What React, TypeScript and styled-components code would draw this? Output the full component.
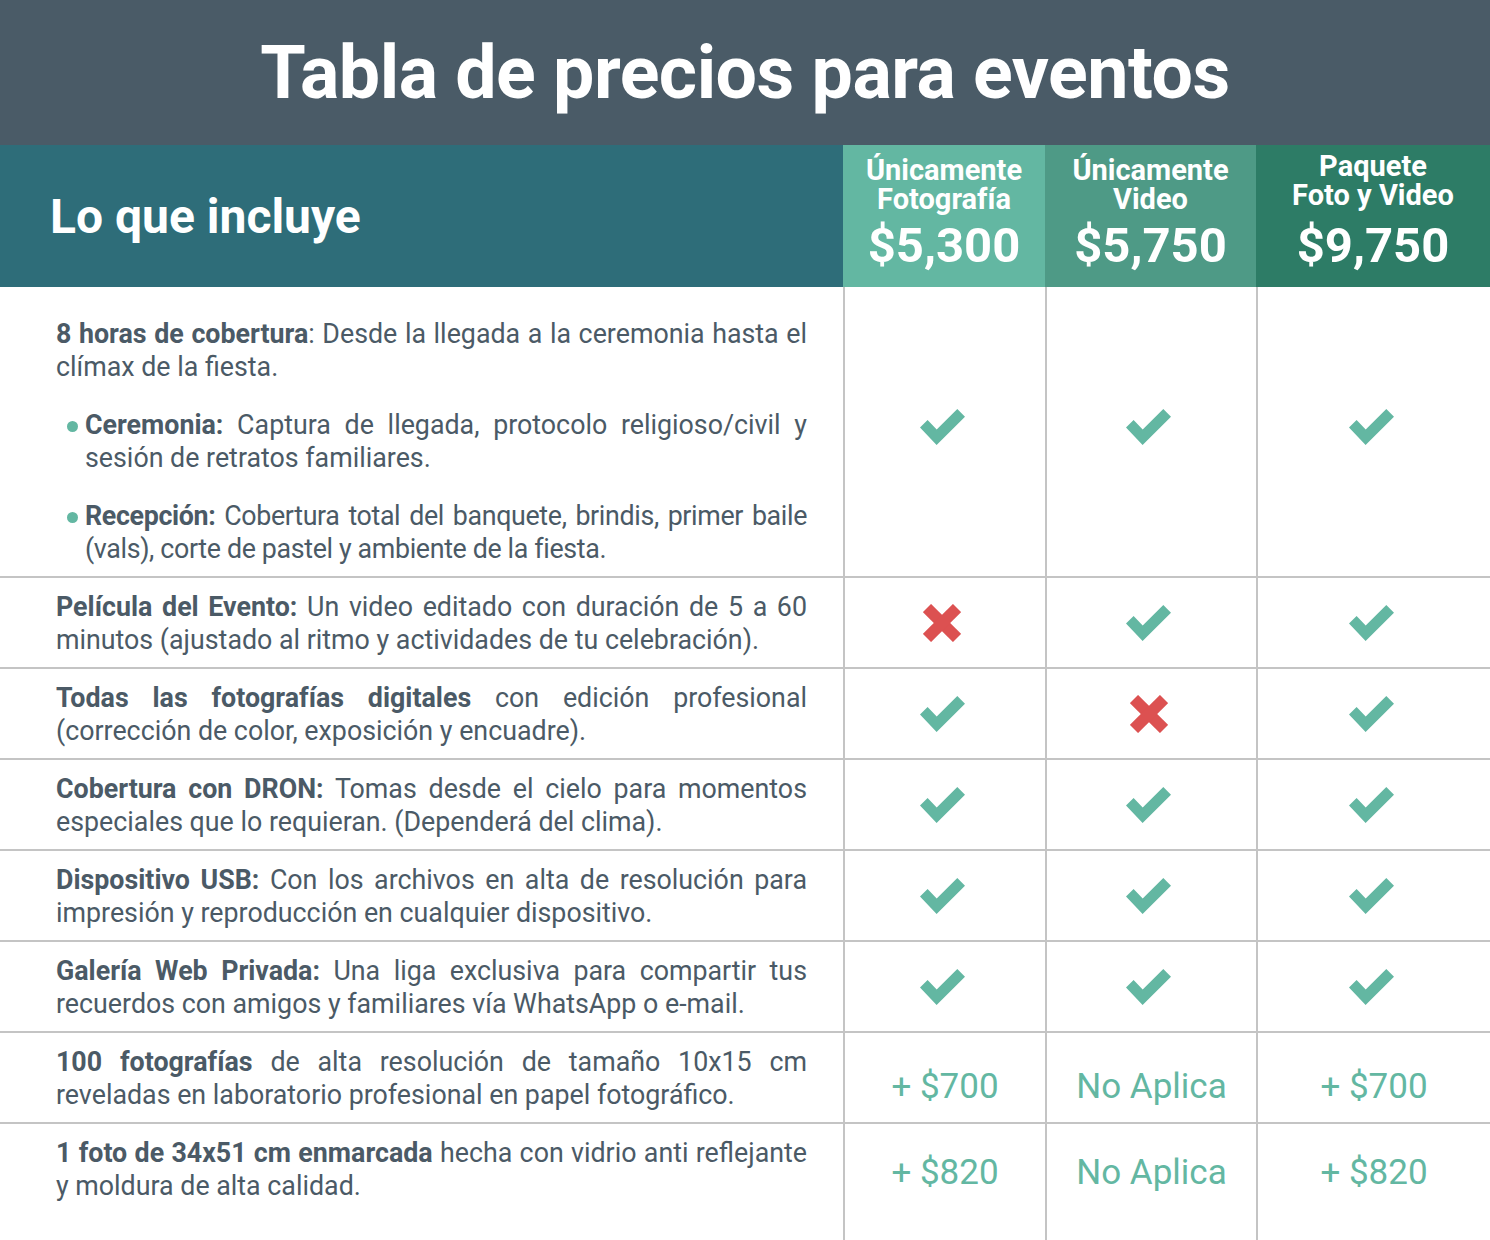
import { FC, ReactNode } from "react";
import styled, { createGlobalStyle } from "styled-components";

const GlobalStyle = createGlobalStyle`
  body {
    margin: 0;
    background: #ffffff;
    font-family: Roboto, "Liberation Sans", sans-serif;
  }
`;

const COLS = "843px 202px 211px 1fr";
const GREEN = "#63b7a2";
const RED = "#dc5151";
const LINE = "#c4c4c4";

const Page = styled.div`
  width: 1490px;
  height: 1240px;
  overflow: hidden;
  display: flex;
  flex-direction: column;
`;

const TitleBar = styled.header`
  background: #4a5b67;
  height: 145px;
  display: flex;
  align-items: center;
  justify-content: center;
`;

const Title = styled.h1`
  margin: 0;
  color: #ffffff;
  font-size: 73.5px;
  font-weight: 700;
  letter-spacing: -0.5px;
`;

const HeadRow = styled.div`
  display: grid;
  grid-template-columns: ${COLS};
  height: 142px;
`;

const HeadLabel = styled.div`
  background: #2e6d79;
  display: flex;
  align-items: center;
  padding-left: 50px;
  color: #ffffff;
  font-size: 48px;
  font-weight: 700;
`;

const PlanHead = styled.div<{ $bg: string }>`
  background: ${(p) => p.$bg};
  display: flex;
  flex-direction: column;
  align-items: center;
  justify-content: flex-end;
  padding-bottom: 15px;
  color: #ffffff;
  text-align: center;
`;

const PlanName = styled.div`
  font-size: 29px;
  font-weight: 700;
  line-height: 29px;
`;

const PlanPrice = styled.div<{ $gap: number }>`
  font-size: 49px;
  font-weight: 700;
  line-height: 52px;
  margin-top: ${(p) => p.$gap}px;
`;

const Row = styled.div<{ $last?: boolean }>`
  display: grid;
  grid-template-columns: ${COLS};
  border-bottom: ${(p) => (p.$last ? "none" : `2px solid ${LINE}`)};
  flex: ${(p) => (p.$last ? 1 : "none")};
`;

const Feature = styled.div<{ $top?: number }>`
  padding: ${(p) => p.$top ?? 13}px 36px 10px 56px;
  font-size: 26.8px;
  line-height: 33px;
  color: #4b5a66;
  text-align: justify;

  b {
    font-weight: 700;
  }
`;

const Para = styled.p`
  margin: 0;
`;

const Bullet = styled.p<{ $tight?: boolean }>`
  position: relative;
  margin: 25px 0 0;
  padding-left: 29px;
  letter-spacing: ${(p) => (p.$tight ? "-0.35px" : "normal")};

  &::before {
    content: "";
    position: absolute;
    left: 11px;
    top: 12px;
    width: 11px;
    height: 11px;
    border-radius: 50%;
    background: ${GREEN};
  }
`;

const Mark = styled.div<{ $tail?: number }>`
  border-left: 2px solid ${LINE};
  display: flex;
  align-items: center;
  justify-content: center;
  padding-bottom: ${(p) => p.$tail ?? 0}px;

  svg {
    margin-right: 6px;
  }
`;

const Addon = styled.span`
  font-size: 35px;
  color: ${GREEN};
  margin-top: 18px;
`;

const Check: FC = () => (
  <svg width="45" height="36" viewBox="0 0 45 36">
    <polygon
      points="7.6,11 0,18.4 16.6,36 45,7.7 37.3,0 16.7,20.6"
      fill={GREEN}
    />
  </svg>
);

const Cross: FC = () => (
  <svg width="38" height="38" viewBox="0 0 38 38">
    <g stroke={RED} strokeWidth="11.5">
      <line x1="4" y1="4" x2="34" y2="34" />
      <line x1="34" y1="4" x2="4" y2="34" />
    </g>
  </svg>
);

type Cell = "check" | "cross" | string;

const plans = [
  { bg: "#63b7a2", name: ["Únicamente", "Fotografía"], price: "$5,300", gap: 6 },
  { bg: "#4e9a86", name: ["Únicamente", "Video"], price: "$5,750", gap: 6 },
  { bg: "#2d7c66", name: ["Paquete", "Foto y Video"], price: "$9,750", gap: 10 },
];

const rows: { text: ReactNode; cells: Cell[]; top?: number; tail?: number }[] = [
  {
    top: 31,
    tail: 10,
    text: (
      <>
        <Para>
          <b>8 horas de cobertura</b>: Desde la llegada a la ceremonia hasta el clímax de la fiesta.
        </Para>
        <Bullet>
          <b>Ceremonia:</b> Captura de llegada, protocolo religioso/civil y sesión de retratos familiares.
        </Bullet>
        <Bullet $tight>
          <b>Recepción:</b> Cobertura total del banquete, brindis, primer baile (vals), corte de pastel y
          ambiente de la fiesta.
        </Bullet>
      </>
    ),
    cells: ["check", "check", "check"],
  },
  {
    text: (
      <Para>
        <b>Película del Evento:</b> Un video editado con duración de 5 a 60 minutos (ajustado al ritmo y
        actividades de tu celebración).
      </Para>
    ),
    cells: ["cross", "check", "check"],
  },
  {
    text: (
      <Para>
        <b>Todas las fotografías digitales</b> con edición profesional (corrección de color, exposición y
        encuadre).
      </Para>
    ),
    cells: ["check", "cross", "check"],
  },
  {
    text: (
      <Para>
        <b>Cobertura con DRON:</b> Tomas desde el cielo para momentos especiales que lo requieran.
        (Dependerá del clima).
      </Para>
    ),
    cells: ["check", "check", "check"],
  },
  {
    text: (
      <Para>
        <b>Dispositivo USB:</b> Con los archivos en alta de resolución para impresión y reproducción en
        cualquier dispositivo.
      </Para>
    ),
    cells: ["check", "check", "check"],
  },
  {
    text: (
      <Para>
        <b>Galería Web Privada:</b> Una liga exclusiva para compartir tus recuerdos con amigos y familiares
        vía WhatsApp o e-mail.
      </Para>
    ),
    cells: ["check", "check", "check"],
  },
  {
    text: (
      <Para>
        <b>100 fotografías</b> de alta resolución de tamaño 10x15 cm reveladas en laboratorio profesional
        en papel fotográfico.
      </Para>
    ),
    cells: ["+ $700", "No Aplica", "+ $700"],
  },
  {
    tail: 38,
    text: (
      <Para>
        <b>1 foto de 34x51 cm enmarcada</b> hecha con vidrio anti reflejante y moldura de alta calidad.
      </Para>
    ),
    cells: ["+ $820", "No Aplica", "+ $820"],
  },
];

const renderCell = (c: Cell) => {
  if (c === "check") return <Check />;
  if (c === "cross") return <Cross />;
  return <Addon>{c}</Addon>;
};

export default function App() {
  return (
    <Page>
      <GlobalStyle />
      <TitleBar>
        <Title>Tabla de precios para eventos</Title>
      </TitleBar>
      <HeadRow>
        <HeadLabel>Lo que incluye</HeadLabel>
        {plans.map((p) => (
          <PlanHead key={p.price} $bg={p.bg}>
            {p.name.map((n) => (
              <PlanName key={n}>{n}</PlanName>
            ))}
            <PlanPrice $gap={p.gap}>{p.price}</PlanPrice>
          </PlanHead>
        ))}
      </HeadRow>
      {rows.map((r, i) => (
        <Row key={i} $last={i === rows.length - 1}>
          <Feature $top={r.top}>{r.text}</Feature>
          {r.cells.map((c, j) => (
            <Mark key={j} $tail={r.tail}>
              {renderCell(c)}
            </Mark>
          ))}
        </Row>
      ))}
    </Page>
  );
}
